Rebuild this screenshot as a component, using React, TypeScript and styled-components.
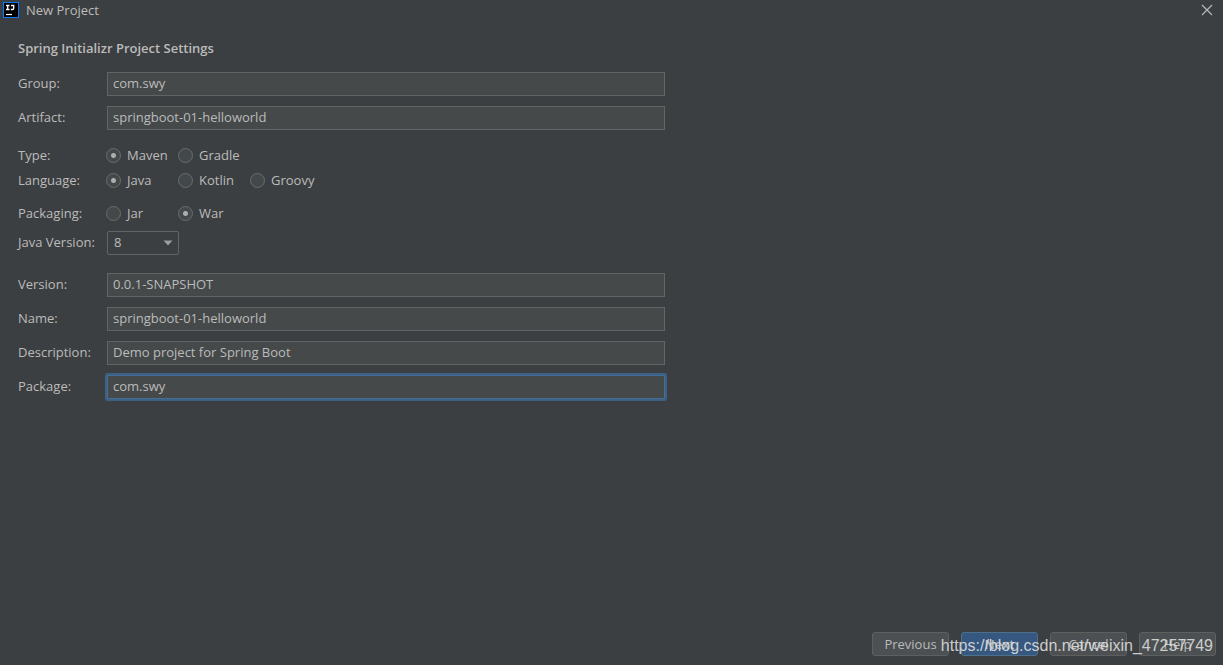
import React from "react";
import styled, { createGlobalStyle, css } from "styled-components";

const uiFont = `"Open Sans", "Noto Sans", "Noto Sans CJK SC", sans-serif`;

const GlobalStyle = createGlobalStyle`
  *, *::before, *::after { box-sizing: border-box; }
  body {
    margin: 0;
    background: #3c3f41;
    color: #bbbbbb;
    font-family: ${uiFont};
    font-size: 13px;
    line-height: 20px;
  }
  input, select, button { font: inherit; color: inherit; }
`;

const Dialog = styled.div`
  position: relative;
  display: flex;
  flex-direction: column;
  min-height: 100vh;
`;

const TitleBar = styled.header`
  display: flex;
  align-items: center;
  gap: 7px;
  height: 20px;
  padding: 0 10px 0 3px;
`;

const WindowTitle = styled.span`
  flex: 1;
`;

const CloseButton = styled.button`
  display: flex;
  padding: 0;
  border: 0;
  background: none;
`;

const Form = styled.form`
  flex: 1;
  display: flex;
  flex-direction: column;
  width: 100%;
  max-width: 683px;
  padding: 18px 18px 24px;
`;

const Heading = styled.h1`
  margin: 0 0 14px;
  font-size: 13px;
  line-height: 20px;
  font-weight: 600;
`;

const Section = styled.div<{ $gap: number; $after?: number }>`
  display: flex;
  flex-direction: column;
  gap: ${(p) => p.$gap}px;
  margin-bottom: ${(p) => p.$after ?? 0}px;
`;

const rowLayout = css`
  display: grid;
  grid-template-columns: 89px minmax(0, 1fr);
  align-items: center;
`;

const Row = styled.div`
  ${rowLayout}
`;

const RadioRow = styled.div`
  ${rowLayout}
  height: 25px;
`;

const Caption = styled.span`
  padding-bottom: 2px;
`;

const TextInput = styled.input`
  width: 100%;
  height: 24px;
  padding: 0 5px 2px;
  border: 1px solid #646464;
  border-radius: 0;
  background: #45494a;
  outline: none;

  &:focus {
    border-color: #466d94;
    box-shadow: 0 0 0 2px #3d6185;
    border-radius: 1px;
  }
`;

const Options = styled.div`
  display: flex;
  margin-left: -1px;
`;

const OptionLabel = styled.label`
  display: flex;
  align-items: center;
  gap: 6px;
  width: 72px;
  white-space: nowrap;
`;

const RadioInput = styled.input`
  appearance: none;
  flex: none;
  width: 15px;
  height: 15px;
  margin: 0;
  border: 1px solid #6b6b6b;
  border-radius: 50%;
  background: #43494a;

  &:checked {
    background: radial-gradient(circle at center, #adadad 2px, #43494a 3px);
  }
`;

const SelectBox = styled.div`
  display: grid;
  align-items: center;
  width: 72px;

  & > * { grid-area: 1 / 1; }
  & > svg {
    justify-self: end;
    margin-right: 6px;
    pointer-events: none;
  }
`;

const Select = styled.select`
  appearance: none;
  width: 100%;
  height: 24px;
  padding: 0 6px 2px;
  border: 1px solid #646464;
  border-radius: 2px;
  background: #3c3f41;
  outline: none;
`;

const Footer = styled.footer`
  display: flex;
  justify-content: flex-end;
  gap: 12px;
  padding: 0 7px 9px;
`;

const Button = styled.button<{ $primary?: boolean }>`
  width: 77px;
  height: 24px;
  padding: 0;
  border: 1px solid ${(p) => (p.$primary ? "#4c708c" : "#5e6060")};
  border-radius: 3px;
  background: ${(p) => (p.$primary ? "#365880" : "#4c5052")};
  font-weight: ${(p) => (p.$primary ? 600 : 400)};
`;

const Watermark = styled.span`
  position: absolute;
  right: 10px;
  bottom: 9px;
  color: rgba(225, 225, 225, 0.88);
  font-family: "Liberation Sans", Arial, sans-serif;
  font-size: 16px;
  line-height: 20px;
  white-space: nowrap;
  pointer-events: none;
`;

function Logo() {
  return (
    <svg width="16" height="16" viewBox="0 0 16 16" aria-hidden="true">
      <rect width="16" height="16" fill="#087cfa" />
      <rect x="1" y="1" width="14" height="14" fill="#000" />
      <path
        d="M3 3.5h3.5M4.7 3v5M3 7.5h3.5M8 3.5h3.4M10.7 3v3.4q0 1.1-1.1 1.1H7.8"
        fill="none"
        stroke="#fff"
        strokeWidth="1.3"
      />
      <path d="M3 12.5h6" stroke="#fff" strokeWidth="1.2" />
    </svg>
  );
}

type FieldProps = { id: string; label: string; value: string; focused?: boolean };

function Field({ id, label, value, focused }: FieldProps) {
  return (
    <Row>
      <Caption as="label" htmlFor={id}>{label}</Caption>
      <TextInput
        id={id}
        type="text"
        defaultValue={value}
        autoFocus={focused}
        spellCheck={false}
      />
    </Row>
  );
}

type RadioFieldProps = { name: string; label: string; options: string[]; selected: string };

function RadioField({ name, label, options, selected }: RadioFieldProps) {
  return (
    <RadioRow role="radiogroup" aria-labelledby={`${name}-label`}>
      <Caption id={`${name}-label`}>{label}</Caption>
      <Options>
        {options.map((option) => (
          <OptionLabel key={option}>
            <RadioInput
              type="radio"
              name={name}
              value={option}
              defaultChecked={option === selected}
            />
            <Caption>{option}</Caption>
          </OptionLabel>
        ))}
      </Options>
    </RadioRow>
  );
}

export default function App() {
  return (
    <>
      <GlobalStyle />
      <Dialog>
        <TitleBar>
          <Logo />
          <WindowTitle>New Project</WindowTitle>
          <CloseButton type="button" aria-label="Close">
            <svg width="12" height="12" viewBox="0 0 12 12" aria-hidden="true">
              <path d="M1 1l10 10M11 1L1 11" stroke="#bbbbbb" strokeWidth="1.1" />
            </svg>
          </CloseButton>
        </TitleBar>

        <Form>
          <Heading>Spring Initializr Project Settings</Heading>
          <Section $gap={10} $after={13}>
            <Field id="group" label="Group:" value="com.swy" />
            <Field id="artifact" label="Artifact:" value="springboot-01-helloworld" />
          </Section>
          <Section $gap={0} $after={8}>
            <RadioField name="type" label="Type:" options={["Maven", "Gradle"]} selected="Maven" />
            <RadioField
              name="language"
              label="Language:"
              options={["Java", "Kotlin", "Groovy"]}
              selected="Java"
            />
          </Section>
          <Section $gap={5} $after={18}>
            <RadioField name="packaging" label="Packaging:" options={["Jar", "War"]} selected="War" />
            <Row>
              <Caption as="label" htmlFor="java-version">Java Version:</Caption>
              <SelectBox>
                <Select id="java-version" defaultValue="8">
                  <option>8</option>
                  <option>11</option>
                  <option>14</option>
                </Select>
                <svg width="10" height="6" viewBox="0 0 10 6" aria-hidden="true">
                  <path d="M0.5 0.5h9L5 5.5z" fill="#9a9da0" />
                </svg>
              </SelectBox>
            </Row>
          </Section>
          <Section $gap={10}>
            <Field id="version" label="Version:" value="0.0.1-SNAPSHOT" />
            <Field id="name" label="Name:" value="springboot-01-helloworld" />
            <Field id="description" label="Description:" value="Demo project for Spring Boot" />
            <Field id="package" label="Package:" value="com.swy" focused />
          </Section>
        </Form>

        <Footer>
          <Button type="button">Previous</Button>
          <Button type="button" $primary>Next</Button>
          <Button type="button">Cancel</Button>
          <Button type="button">Help</Button>
        </Footer>
        <Watermark>https://blog.csdn.net/weixin_47257749</Watermark>
      </Dialog>
    </>
  );
}
